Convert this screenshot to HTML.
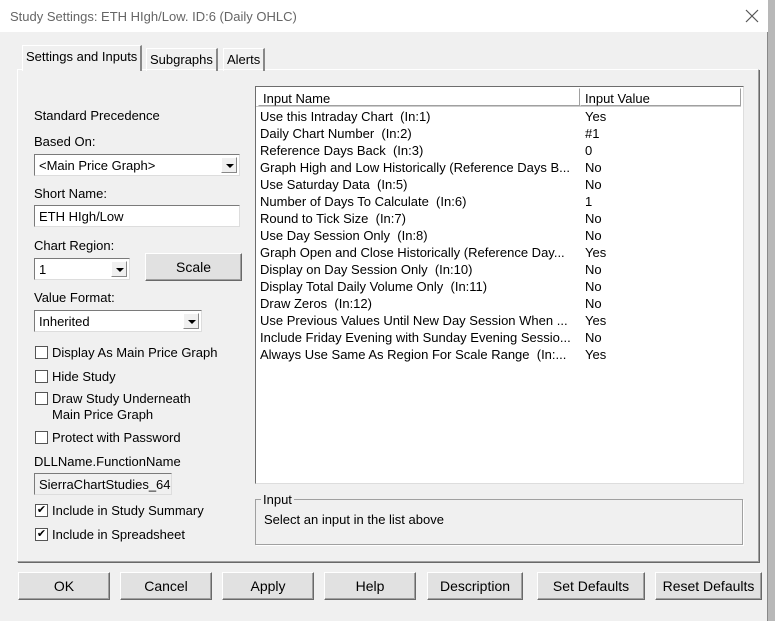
<!DOCTYPE html>
<html><head><style>
*{box-sizing:border-box;margin:0;padding:0}
body{width:775px;height:621px;background:#b8b8b8;font:13px "Liberation Sans",sans-serif;color:#000;position:relative;overflow:hidden}
.a{position:absolute}
.win{left:0;top:0;width:768px;height:621px;background:#f0f0f0;border-right:1px solid #888}
.title{left:0;top:0;width:768px;height:32px;background:#fff;color:#666;font-size:13px;padding:9px 0 0 10px}
.panel{left:17px;top:69px;width:742px;height:493px;border:1px solid #fff;border-right-color:#a0a0a0;border-bottom-color:#a0a0a0;box-shadow:1px 1px 0 #696969}
.tab{top:47px;height:23px;border:1px solid #fff;border-right:2px solid #888;border-bottom:none;padding:3px 3px 0 3px;font-size:13px}
.edit{background:#fff;border:1px solid #7a7a7a;border-right-color:#ddd;border-bottom-color:#ddd;padding:3px 4px;height:22px;font-size:13px}
.dd{position:absolute;right:2px;top:2px;width:16px;height:16px;background:#f0f0f0;border:1px solid #fff;border-right-color:#888;border-bottom-color:#888}
.dd:after{content:"";position:absolute;left:4px;top:6px;border:4px solid transparent;border-top:4px solid #000;border-bottom:0}
.btn{background:#e1e1e1;border:1px solid #fff;border-right-color:#696969;border-bottom-color:#696969;box-shadow:inset -1px -1px 0 #a0a0a0;text-align:center;font-size:14px;height:28px;line-height:26px}
.cb{width:13px;height:13px;background:#fff;border:1px solid #555;font-size:11px;line-height:10px;text-align:center}
.tbl{left:255px;top:86px;width:489px;height:398px;background:#fff;border:1px solid #6d6d6d;border-right-color:#ddd;border-bottom-color:#ddd}
.row{position:absolute;left:4px;height:17px;white-space:nowrap}
.v{position:absolute;left:325px}
</style></head><body>
<div class="a win"></div>
<div class="a title">Study Settings: ETH HIgh/Low. ID:6 (Daily OHLC)</div>
<svg class="a" style="left:745px;top:9px" width="14" height="14"><path d="M1 1L13 13M13 1L1 13" stroke="#555" stroke-width="1.2"/></svg>
<div class="a panel"></div>
<div class="a tab" style="left:22px;top:45px;height:26px;background:#f0f0f0;z-index:2">Settings and Inputs</div>
<div class="a tab" style="left:146px;top:48px">Subgraphs</div>
<div class="a tab" style="left:223px;top:48px">Alerts</div>

<div class="a" style="left:34px;top:108px">Standard Precedence</div>
<div class="a" style="left:34px;top:134px">Based On:</div>
<div class="a edit" style="left:34px;top:154px;width:206px">&lt;Main Price Graph&gt;<div class="dd"></div></div>
<div class="a" style="left:34px;top:186px">Short Name:</div>
<div class="a edit" style="left:34px;top:205px;width:206px">ETH HIgh/Low</div>
<div class="a" style="left:34px;top:238px">Chart Region:</div>
<div class="a edit" style="left:34px;top:258px;width:96px">1<div class="dd"></div></div>
<div class="a btn" style="left:145px;top:253px;width:97px">Scale</div>
<div class="a" style="left:34px;top:290px">Value Format:</div>
<div class="a edit" style="left:34px;top:310px;width:168px">Inherited<div class="dd"></div></div>
<div class="a cb" style="left:35px;top:346px"></div><div class="a" style="left:52px;top:345px">Display As Main Price Graph</div>
<div class="a cb" style="left:35px;top:370px"></div><div class="a" style="left:52px;top:369px">Hide Study</div>
<div class="a cb" style="left:35px;top:392px"></div><div class="a" style="left:52px;top:391px;line-height:16px">Draw Study Underneath<br>Main Price Graph</div>
<div class="a cb" style="left:35px;top:431px"></div><div class="a" style="left:52px;top:430px">Protect with Password</div>
<div class="a" style="left:34px;top:454px">DLLName.FunctionName</div>
<div class="a edit" style="left:34px;top:473px;width:138px;background:#f0f0f0">SierraChartStudies_64</div>
<div class="a cb" style="left:35px;top:504px">✔</div><div class="a" style="left:52px;top:503px">Include in Study Summary</div>
<div class="a cb" style="left:35px;top:528px">✔</div><div class="a" style="left:52px;top:527px">Include in Spreadsheet</div>

<div class="a tbl">
<div class="a" style="left:0;top:0;width:485px;height:20px;background:#fff;border-bottom:1px solid #ccc"></div>
<div class="a" style="left:2px;top:1px;width:322px;height:18px;border:1px solid #fff;border-right-color:#a0a0a0;border-bottom-color:#a0a0a0;padding:2px 4px">Input Name</div>
<div class="a" style="left:324px;top:1px;width:161px;height:18px;border:1px solid #fff;border-right-color:#a0a0a0;border-bottom-color:#a0a0a0;padding:2px 4px">Input Value</div>
<div class="row" style="top:22px">Use this Intraday Chart &nbsp;(In:1)<span class="v">Yes</span></div>
<div class="row" style="top:39px">Daily Chart Number &nbsp;(In:2)<span class="v">#1</span></div>
<div class="row" style="top:56px">Reference Days Back &nbsp;(In:3)<span class="v">0</span></div>
<div class="row" style="top:73px">Graph High and Low Historically (Reference Days B...<span class="v">No</span></div>
<div class="row" style="top:90px">Use Saturday Data &nbsp;(In:5)<span class="v">No</span></div>
<div class="row" style="top:107px">Number of Days To Calculate &nbsp;(In:6)<span class="v">1</span></div>
<div class="row" style="top:124px">Round to Tick Size &nbsp;(In:7)<span class="v">No</span></div>
<div class="row" style="top:141px">Use Day Session Only &nbsp;(In:8)<span class="v">No</span></div>
<div class="row" style="top:158px">Graph Open and Close Historically (Reference Day...<span class="v">Yes</span></div>
<div class="row" style="top:175px">Display on Day Session Only &nbsp;(In:10)<span class="v">No</span></div>
<div class="row" style="top:192px">Display Total Daily Volume Only &nbsp;(In:11)<span class="v">No</span></div>
<div class="row" style="top:209px">Draw Zeros &nbsp;(In:12)<span class="v">No</span></div>
<div class="row" style="top:226px">Use Previous Values Until New Day Session When ...<span class="v">Yes</span></div>
<div class="row" style="top:243px">Include Friday Evening with Sunday Evening Sessio...<span class="v">No</span></div>
<div class="row" style="top:260px">Always Use Same As Region For Scale Range &nbsp;(In:...<span class="v">Yes</span></div>
</div>

<div class="a" style="left:255px;top:499px;width:488px;height:46px;border:1px solid #a0a0a0;box-shadow:1px 1px 0 #fff"></div>
<div class="a" style="left:261px;top:492px;background:#f0f0f0;padding:0 2px">Input</div>
<div class="a" style="left:264px;top:512px">Select an input in the list above</div>

<div class="a btn" style="left:18px;top:572px;width:92px">OK</div>
<div class="a btn" style="left:120px;top:572px;width:92px">Cancel</div>
<div class="a btn" style="left:222px;top:572px;width:92px">Apply</div>
<div class="a btn" style="left:324px;top:572px;width:92px">Help</div>
<div class="a btn" style="left:427px;top:572px;width:96px">Description</div>
<div class="a btn" style="left:537px;top:572px;width:108px">Set Defaults</div>
<div class="a btn" style="left:655px;top:572px;width:107px">Reset Defaults</div>
</body></html>
